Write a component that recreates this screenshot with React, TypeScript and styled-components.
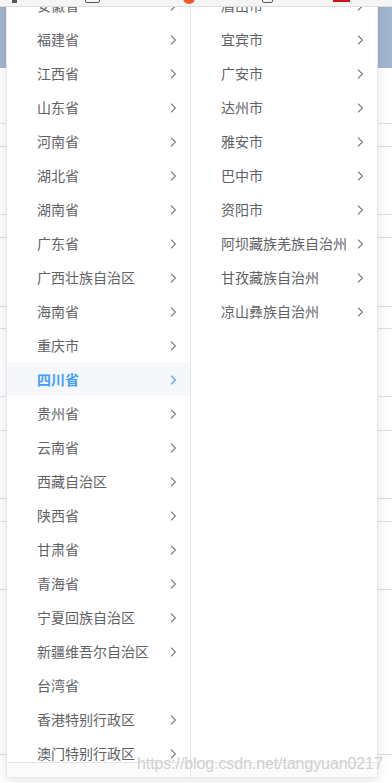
import styled, { createGlobalStyle } from "styled-components";

const GlobalStyle = createGlobalStyle`
	html, body {
		margin: 0;
		padding: 0;
		background: #ffffff;
		font-family: "Liberation Sans", "Noto Sans CJK SC", sans-serif;
	}
`;

const Page = styled.div`
	position: relative;
	width: 392px;
	height: 783px;
	overflow: hidden;
	background: #ffffff;
`;

const BrowserBar = styled.div`
	position: relative;
	z-index: 5;
	display: flex;
	align-items: flex-end;
	height: 7px;
	padding-bottom: 3px;
	background: #f5f5f5;
	border-bottom: 1px solid #dedede;
	box-sizing: border-box;
	overflow: hidden;
`;

const BarMark = styled.span<{ gap: number; width: number; kind: "dark" | "box" | "dot" | "red" }>`
	flex: none;
	margin-left: ${({ gap }) => gap}px;
	width: ${({ width }) => width}px;
	height: ${({ kind }) => (kind === "dot" ? "12px" : "9px")};
	margin-bottom: ${({ kind }) => (kind === "dot" ? "-1px" : kind === "red" ? "1px" : "0")};
	box-sizing: border-box;
	border-radius: ${({ kind }) => (kind === "dot" ? "50%" : kind === "box" ? "2px" : "0")};
	background: ${({ kind }) =>
		kind === "dot" ? "#f05a28" : kind === "red" ? "#d0121b" : kind === "dark" ? "#555" : "transparent"};
	border: ${({ kind }) => (kind === "box" ? "1px solid #555" : "none")};
`;

const HeaderBand = styled.div`
	height: 61px;
	background: #a3b4cd;
`;

const TableRow = styled.div<{ h: number }>`
	height: ${({ h }) => h}px;
	border-bottom: 1px solid #dcdfe6;
	box-sizing: border-box;
`;

const Panel = styled.div`
	position: absolute;
	z-index: 2;
	top: -19px;
	left: 6px;
	height: 797px;
	display: flex;
	background: #ffffff;
	border: 1px solid #e4e7ed;
	border-radius: 4px;
	box-sizing: border-box;
	box-shadow: 0 2px 12px 0 rgba(0, 0, 0, 0.1);
	overflow: hidden;
`;

const Menu = styled.div<{ w: number; last?: boolean }>`
	width: ${({ w }) => w}px;
	display: flex;
	flex-direction: column;
	border-right: ${({ last }) => (last ? "none" : "1px solid #e4e7ed")};
`;

const MenuList = styled.ul`
	flex: 1;
	margin: 0;
	padding: 6px 0 0;
	list-style: none;
	overflow: hidden;
`;

const ScrollTrack = styled.div`
	height: 14px;
	border-top: 1px solid #e6e6e6;
	background: #fbfbfb;
`;

const Node = styled.li<{ active?: boolean }>`
	position: relative;
	display: flex;
	align-items: center;
	height: 34px;
	line-height: 34px;
	padding: 0 30px 0 20px;
	font-size: 14px;
	color: ${({ active }) => (active ? "#409eff" : "#606266")};
	font-weight: ${({ active }) => (active ? 700 : 400)};
	background: ${({ active }) => (active ? "#f5f7fa" : "transparent")};
	font-family: "Noto Sans CJK SC", sans-serif;
`;

const Label = styled.span`
	flex: 1;
	padding: 0 10px;
	white-space: nowrap;
	overflow: hidden;
`;

const Postfix = styled.svg`
	position: absolute;
	right: 10px;
	top: 11px;
	width: 14px;
	height: 14px;
`;

const Watermark = styled.div`
	position: absolute;
	z-index: 6;
	left: 137px;
	top: 755px;
	font-family: "Liberation Sans", sans-serif;
	font-size: 16px;
	letter-spacing: -0.1px;
	color: rgba(190, 190, 190, 0.75);
	text-shadow: 0 0 1px rgba(255, 255, 255, 0.9);
	white-space: nowrap;
`;

const provinces = [
	"安徽省",
	"福建省",
	"江西省",
	"山东省",
	"河南省",
	"湖北省",
	"湖南省",
	"广东省",
	"广西壮族自治区",
	"海南省",
	"重庆市",
	"四川省",
	"贵州省",
	"云南省",
	"西藏自治区",
	"陕西省",
	"甘肃省",
	"青海省",
	"宁夏回族自治区",
	"新疆维吾尔自治区",
	"台湾省",
	"香港特别行政区",
	"澳门特别行政区",
];

const cities = [
	"眉山市",
	"宜宾市",
	"广安市",
	"达州市",
	"雅安市",
	"巴中市",
	"资阳市",
	"阿坝藏族羌族自治州",
	"甘孜藏族自治州",
	"凉山彝族自治州",
];

// background table rows behind the dropdown
const rowHeights = [56, 23, 68, 23, 69, 22, 68, 34, 68, 23, 68, 165];

function Arrow({ active }: { active?: boolean }) {
	return (
		<Postfix viewBox="0 0 14 14">
			<path
				d="M5 2.6 L9.4 7 L5 11.4"
				fill="none"
				stroke={active ? "#409eff" : "#707377"}
				strokeWidth="1.1"
			/>
		</Postfix>
	);
}

export default function App() {
	return (
		<>
			<GlobalStyle />
			<Page>
				<BrowserBar>
					<BarMark kind="dark" gap={12} width={5} />
					<BarMark kind="box" gap={68} width={15} />
					<BarMark kind="dot" gap={83} width={12} />
					<BarMark kind="box" gap={67} width={11} />
					<BarMark kind="red" gap={60} width={17} />
				</BrowserBar>
				<HeaderBand />
				{rowHeights.map((h, i) => (
					<TableRow key={i} h={h} />
				))}

				<Panel>
					<Menu w={183}>
						<MenuList>
							{provinces.map((p) => (
								<Node key={p} active={p === "四川省"}>
									<Label>{p}</Label>
									{p !== "台湾省" && <Arrow active={p === "四川省"} />}
								</Node>
							))}
						</MenuList>
						<ScrollTrack />
					</Menu>
					<Menu w={186} last>
						<MenuList>
							{cities.map((c) => (
								<Node key={c}>
									<Label>{c}</Label>
									<Arrow />
								</Node>
							))}
						</MenuList>
						<ScrollTrack />
					</Menu>
				</Panel>

				<Watermark>https://blog.csdn.net/tangyuan0217</Watermark>
			</Page>
		</>
	);
}
